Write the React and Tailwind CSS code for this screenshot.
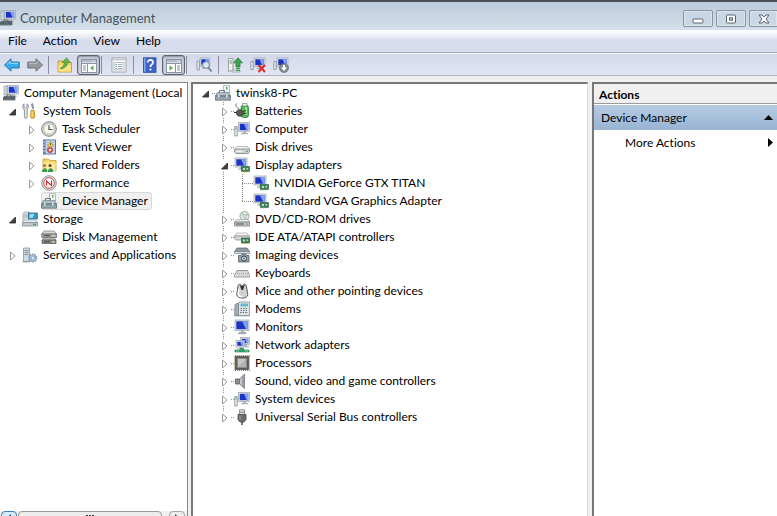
import React, { useState } from 'react';
import clsx from 'clsx';

// ---------- Icons (16x16) ----------

const Svg = ({ children }) => (
    <svg width="16" height="16" viewBox="0 0 16 16" className="block shrink-0" aria-hidden="true">{children}</svg>
);

// Blue screen with a grey frame, shared by most of the device icons
const Screen = ({ x = 4, y = 1, w = 12, h = 9 }) => (
    <g>
        <rect x={x} y={y} width={w} height={h} fill="#dfe3e6" stroke="#9aa4ac" strokeWidth=".7" />
        <rect x={x + 1.3} y={y + 1.3} width={w - 2.6} height={h - 2.6} fill="#1c33c4" />
        <path d={`M${x + w / 2} ${y + 1.3}h${w / 2 - 1.3}v${h - 2.6}h-1.6z`} fill="#7fa2f2" />
        <path d={`M${x + w / 2 - 1} ${y + h}h3v1.6h2v1.2h-7v-1.2h2z`} fill="#aab3ba" />
    </g>
);

const Card = ({ x = 8, y = 10 }) => (
    <g>
        <rect x={x} y={y} width="8" height="5" fill="#3d8258" stroke="#2a5c3d" strokeWidth=".6" />
        <path d={`M${x + 1.5} ${y + 1.5}h2v2h-2zM${x + 5} ${y + 1.5}h1.6v1.6h-1.6z`} fill="#c4dfbe" />
        <path d={`M${x + 1} ${y + 5}v1M${x + 3} ${y + 5}v1M${x + 5} ${y + 5}v1`} stroke="#c3a94c" strokeWidth=".8" />
    </g>
);

const ManagementIcon = () => (
    <Svg>
        <rect x="1" y="1" width="3" height="9" fill="#d3dade" stroke="#7f8c94" strokeWidth=".6" />
        <Screen x={4.5} y={.5} w={11} h={8.5} />
        <path d="M1 11.5h11v3.5h-12v-2z" fill="#75818a" stroke="#47525a" strokeWidth=".7" />
        <path d="M4 11.5v-1.5h4v1.5M0 13h12M3 12.5v1.5M9 12.5v1.5" stroke="#3d474e" fill="none" strokeWidth=".8" />
    </Svg>
);

const ToolsIcon = () => (
    <Svg>
        <path d="M2 .8v3l1.5 1.3L5 3.8V.8c1.6.8 2 3.4.6 4.9L5.2 7v7c0 1.8-2.8 1.8-2.8 0V7C.3 5.500.2 2 2 .8z" fill="#dfe2e4" stroke="#7c8388" strokeWidth=".8" />
        <path d="M9.2 1.2 10.8.5l.9 5-.7.8z" fill="#9fa7ac" stroke="#6d757b" strokeWidth=".6" />
        <path d="M9 7.500h3.200l.7 6.300c0 2-4.600 2-4.400 0z" fill="#f3b62c" stroke="#b97d12" strokeWidth=".7" />
        <path d="M10.200 8.500v5.500" stroke="#fde59a" />
    </Svg>
);

const ClockIcon = () => (
    <Svg>
        <circle cx="8" cy="8" r="7.3" fill="#d9dcdf" stroke="#7b828a" />
        <circle cx="8" cy="8" r="5.3" fill="#faf8ea" stroke="#b7b08c" strokeWidth=".8" />
        <path d="M8 4.2V8.5h3.5" fill="none" stroke="#4c545c" strokeWidth="1.2" />
    </Svg>
);

const EventIcon = () => (
    <Svg>
        <rect x="2.5" y="1" width="12" height="14" fill="#cddcf0" stroke="#5b76a5" />
        <path d="M5 3.500h9M5 5.500h9M5 7.500h9M5 9.500h9M5 11.500h9" stroke="#95aed0" strokeWidth=".7" />
        <rect x="2" y="1" width="2.5" height="14" fill="#6079a6" />
        <path d="M1 3h3M1 6h3M1 9h3M1 12h3" stroke="#d5d9df" />
        <path d="m9.5 2 2.800 5.200H6.700z" fill="#ffd93b" stroke="#bb9415" strokeWidth=".6" />
        <path d="M9.5 4v2" stroke="#4b3c00" strokeWidth=".9" />
        <circle cx="9" cy="11" r="2.7" fill="#e25753" stroke="#b02b28" strokeWidth=".5" />
        <path d="m8 10 2 2m0-2-2 2" stroke="#fff" />
    </Svg>
);

const SharedIcon = () => (
    <Svg>
        <path d="M2 2h5.500L9 3.500h6V14H2z" fill="#f5d566" stroke="#c19d32" strokeWidth=".8" />
        <path d="M2.500 5.500h12V14h-12z" fill="#fbe99c" />
        <circle cx="3.500" cy="8.500" r="1.500" fill="#a9672f" /><circle cx="9" cy="8.500" r="1.500" fill="#6f431d" />
        <path d="M1 15c0-4 5-5.500 5.200-1v1z" fill="#3b9a42" />
        <path d="M6.800 15c0-4 5-5.500 5.200-1v1z" fill="#35915f" />
    </Svg>
);

const PerformanceIcon = () => (
    <Svg>
        <circle cx="8" cy="8" r="7.3" fill="#dfe1e3" stroke="#858b90" strokeWidth=".9" />
        <circle cx="8" cy="8" r="5.300" fill="#fff" stroke="#d5484a" />
        <path d="M5.500 10.500V6l5 4.500V5.500" fill="none" stroke="#c92a2a" strokeWidth="1.100" />
    </Svg>
);

const DeviceManagerIcon = () => (
    <Svg>
        <path d="M8.500.5h6v8h-6z" fill="#eef2ef" stroke="#9aa9a2" strokeWidth=".7" />
        <path d="M11 2h1.500v2.500H11z" fill="#63a778" />
        <path d="M4.500 7.500v-2h5v2" fill="none" stroke="#667986" />
        <path d="M2.200 7.500h11.600l1.700 3.300H.6z" fill="#b3c0c8" stroke="#71838e" strokeWidth=".7" />
        <path d="M.5 10.800h15v4.400H.5z" fill="#8799a4" stroke="#56666f" strokeWidth=".7" />
        <path d="M3 10v2.500h1.500V10zM11 10v2.500h1.500V10z" fill="#e3e9ec" />
        <path d="M1 13.800h14" stroke="#b3c0c8" strokeWidth=".7" />
    </Svg>
);

const StorageIcon = () => (
    <Svg>
        <path d="M1 2.5 2.500 1h5v9H1z" fill="#dae1e4" stroke="#8b979e" strokeWidth=".7" />
        <path d="M2 4h5M2 6h5" stroke="#8b979e" strokeWidth=".7" />
        <rect x="6.500" y="2" width="9" height="6" fill="#2e94c4" stroke="#276d90" strokeWidth=".7" />
        <path d="M7.500 3h5l-2 4h-3z" fill="#9edcf2" />
        <path d="M2 9h12l1.500 2.500H.5z" fill="#eceff0" stroke="#8b979e" strokeWidth=".6" />
        <path d="M.5 11.500h15V15H.5z" fill="#c0c9ce" stroke="#76838b" strokeWidth=".7" />
        <path d="M11 13.300h3" stroke="#38a742" strokeWidth="1.200" />
    </Svg>
);

const DiskManagementIcon = () => (
    <Svg>
        <path d="M3 2h10l2.500 3H.8z" fill="#dbdcd9" stroke="#777976" strokeWidth=".7" />
        <path d="M.8 5h14.700v3.500H.8z" fill="#a6a8a3" stroke="#5d5f5a" strokeWidth=".7" />
        <path d="M2.500 9h11l1.500 2H1.500z" fill="#d1d2cf" stroke="#777976" strokeWidth=".6" />
        <path d="M1 11h14v3.500H1z" fill="#8d908b" stroke="#50524e" strokeWidth=".7" />
        <path d="M3 6.700h6M3 12.800h6" stroke="#3f413e" />
        <path d="M11.500 6.700h2M11.500 12.800h2" stroke="#e9eae7" strokeWidth="1.300" />
    </Svg>
);

const ServicesIcon = () => (
    <Svg>
        <path d="M1.500 1h6v13.500h-6z" fill="#cfdae0" stroke="#81939d" strokeWidth=".8" />
        <path d="M2.500 3.500h4M2.500 5.500h4M2.500 7.500h4" stroke="#6e8590" strokeWidth=".8" />
        <path d="M.5 14.800h7" stroke="#81939d" />
        <circle cx="10.800" cy="11" r="3.700" fill="#a9c3da" stroke="#7b9abb" strokeDasharray="1.500 .8" strokeWidth="1.700" />
        <circle cx="10.800" cy="11" r="1.500" fill="#fff" stroke="#7b9abb" strokeWidth=".7" />
    </Svg>
);

const BatteryIcon = () => (
    <Svg>
        <path d="M5 6C1 4 1.500 1 3 .5" fill="none" stroke="#6b7a68" />
        <rect x="7" y="2" width="7.500" height="12.500" rx="2.500" fill="#55b85a" stroke="#2d7d38" strokeWidth=".8" />
        <rect x="8.500" y=".6" width="4.500" height="2.400" fill="#e8ece8" stroke="#78847a" strokeWidth=".6" />
        <path d="M12 4v8" stroke="#b5ecb0" strokeWidth="1.500" />
        <path d="M2.500 8.500C3.500 6.500 6 6 8 7.500l1.500 2.500L8 12.500c-2 1.500-5 .5-5.500-1.500z" fill="#5d5a50" stroke="#2d2b25" strokeWidth=".7" />
        <path d="M9 8.500l3-1M9.300 11l3-1M0 9.500h2.500" stroke="#38342d" strokeWidth="1.100" />
    </Svg>
);

const ComputerIcon = () => (
    <Svg>
        <path d="M.7 5.500h2.600v9.500H.7z" fill="#e4eae4" stroke="#7f8b83" strokeWidth=".7" />
        <path d="M2 6.500v2" stroke="#4aa35b" />
        <Screen x={4.5} y={1.5} w={11} h={9} />
    </Svg>
);

const DriveIcon = () => (
    <Svg>
        <path d="M3 7.500h10.500l2 3H.8z" fill="#f2f3f2" stroke="#a2a6a4" strokeWidth=".7" />
        <path d="M.6 10h15v3L14 14.500H2L.6 13z" fill="#cfd2d1" stroke="#7f8482" strokeWidth=".8" />
        <path d="M2.500 12.300h6" stroke="#fff" />
        <path d="M12 12.300h2" stroke="#4c9b56" />
    </Svg>
);

const DisplayIcon = () => (
    <Svg>
        <Screen x={1} y={1} w={12} h={9} />
        <Card x={7.5} y={9.5} />
    </Svg>
);

const DvdIcon = () => (
    <Svg>
        <circle cx="10.500" cy="5" r="4.500" fill="#dfe9e2" stroke="#8a9a90" strokeWidth=".8" />
        <path d="M10.500 5 7.500 1.700M10.500 5l4-2M10.500 5l1 4" stroke="#76b98b" strokeWidth=".9" />
        <circle cx="10.500" cy="5" r="1.300" fill="#fff" stroke="#8a9a90" strokeWidth=".6" />
        <path d="M2.500 8.500h11.500l1.500 2.500H.8z" fill="#eff1f0" stroke="#9da2a0" strokeWidth=".7" />
        <path d="M.6 11h15v4H.6z" fill="#c7cbc9" stroke="#797e7c" strokeWidth=".8" />
        <path d="M2 13h8" stroke="#454a48" /><path d="M12 13h2" stroke="#42a750" />
    </Svg>
);

const IdeIcon = () => (
    <Svg>
        <path d="M2.500 4h10.500l2 3H.8z" fill="#f3f4f3" stroke="#a2a6a4" strokeWidth=".7" />
        <path d="M.6 7h15v4H2L.6 9.500z" fill="#d5d8d6" stroke="#868b89" strokeWidth=".7" />
        <Card x={7.5} y={9} />
    </Svg>
);

const ImagingIcon = () => (
    <Svg>
        <path d="M3 1h10l2.500 3.500H.5z" fill="#8f9aa1" stroke="#525e65" strokeWidth=".7" />
        <path d="M.5 4.500h15v2H.5z" fill="#d5dbde" stroke="#65727a" strokeWidth=".6" />
        <path d="M4.500 8.500h2.500l1-1.500h3.500l1 1.500h2.500V15H4.500z" fill="#93a1aa" stroke="#47545d" strokeWidth=".7" />
        <circle cx="10" cy="11.500" r="2.500" fill="#dfe9ef" stroke="#344049" />
        <circle cx="10" cy="11.500" r="1" fill="#2b6591" />
    </Svg>
);

const KeyboardIcon = () => (
    <Svg>
        <path d="M3 5.500h10.500l2 5v1.500H.6v-1.500z" fill="#e7e8e8" stroke="#7d8182" strokeWidth=".8" />
        <path d="M3.500 7h10M3 8.500h11M2.500 10h12" stroke="#9da1a3" strokeDasharray="1 1" />
    </Svg>
);

const MouseIcon = () => (
    <Svg>
        <path d="M4 2.500C5 .5 7 .8 7.500 3h1C9 .700 11.500.5 12.300 2.500l1.500 9c0 4.800-11 4.800-11 0z" fill="#cfd1d3" stroke="#4c5054" strokeWidth=".9" />
        <path d="M5.500 1.500 7.500 7h1.500l2-5.500-2 1.500h-2z" fill="#2f3336" />
        <path d="M4.800 6 4.300 11c.5 2 2.500 2.800 4 2.500" stroke="#fff" fill="none" strokeWidth="1.400" />
    </Svg>
);

const ModemIcon = () => (
    <Svg>
        <path d="M5 1h10.500v13.500H2.500z" fill="#e0e5e8" stroke="#7c888f" strokeWidth=".7" />
        <path d="M1 3.500 3 2.500h1.500v11L.7 14.500z" fill="#a4b0b8" stroke="#65727a" strokeWidth=".7" />
        <rect x="6.500" y="2.500" width="7.500" height="3" fill="#62b9cf" />
        <path d="M6.500 7.500h7.500M6.500 9.500h7.500M6 11.500h8" stroke="#65727a" strokeDasharray="1.500 1" />
        <path d="M.5 14.800h15" stroke="#8a959b" />
    </Svg>
);

const MonitorIcon = () => (
    <Svg>
        <Screen x={1} y={1} w={14} h={10.5} />
        <path d="M4 14.500h8" stroke="#9ba5ac" strokeWidth="1.300" />
    </Svg>
);

const NetworkIcon = () => (
    <Svg>
        <Screen x={6.5} y={.5} w={9} h={7} />
        <Screen x={2} y={3.5} w={8.5} h={6.5} />
        <path d="M6.500 11.500h3v1.500H15v2H1v-2h5.500z" fill="#37a46b" stroke="#1f7a4b" strokeWidth=".6" />
        <path d="M2 14h3M11 14h3" stroke="#97d9b5" strokeWidth=".8" />
    </Svg>
);

const ProcessorIcon = () => (
    <Svg>
        <rect x=".8" y=".8" width="14.400" height="14.400" fill="none" stroke="#9b8453" strokeWidth="1.500" strokeDasharray="1 1" />
        <rect x="1.500" y="1.500" width="13" height="13" fill="#5d5c57" stroke="#3e3d39" strokeWidth=".6" />
        <rect x="3.500" y="3.500" width="9" height="9" fill="#c6c8c7" stroke="#8a8c8b" strokeWidth=".7" />
        <path d="m4 12 8-8v8z" fill="#b0b2b1" />
    </Svg>
);

const SoundIcon = () => (
    <Svg>
        <path d="M1.500 6h4v5h-4z" fill="#8b9094" stroke="#565b5f" strokeWidth=".8" />
        <path d="M5.500 6 10.500 1v14.500l-5-4.500z" fill="#c2c6c9" stroke="#6c7175" strokeWidth=".8" />
        <path d="M9 3.500v10" stroke="#777c80" />
    </Svg>
);

const UsbIcon = () => (
    <Svg>
        <path d="M5.500.8h5V6h-5z" fill="#e7e8e9" stroke="#76797b" strokeWidth=".8" />
        <path d="M7 2.500v1.500M9 2.500v1.500" stroke="#4d5052" />
        <path d="M4 5.500h8v5L10 13H6l-2-2.500z" fill="#6a6d70" stroke="#424547" strokeWidth=".8" />
        <path d="M6 6.500v4" stroke="#a4a7a9" /><path d="M8 13v3" stroke="#55585a" strokeWidth="1.600" />
    </Svg>
);

// ---------- Toolbar icons ----------

const ArrowIcon = ({ forward }) => (
    <Svg>
        <path
            d={forward ? 'M15.500 8 9 1.800V5H.8v6H9v3.200z' : 'M.5 8 7 1.800V5h8.200v6H7v3.200z'}
            fill={forward ? '#969a9e' : '#36aee9'}
            stroke={forward ? '#65696d' : '#1c6ba4'}
            strokeWidth=".9"
            strokeLinejoin="round"
        />
        <path d={forward ? 'M2 6.300h8V4.500' : 'M14 6.300H6V4.500L3 7.500'} fill="none" stroke={forward ? '#c5c8ca' : '#a5e4fa'} strokeWidth=".9" />
    </Svg>
);

const UpFolderIcon = () => (
    <Svg>
        <path d="M1 4h5l1.500 1.500H14.500V15H1z" fill="#f4cf64" stroke="#bd9335" strokeWidth=".8" />
        <path d="M1.500 8h12.500v6.500H1.500z" fill="#fbe08a" />
        <path d="M3.500 11C6 10 7.500 8 7.500 5.500H5.200L9.500.8 13.200 5.500h-2.700C10.500 9 7.500 11.500 3.500 11.800z" fill="#62b64a" stroke="#3c8a2e" strokeWidth=".7" />
    </Svg>
);

const PaneIcon = ({ right }) => (
    <Svg>
        <rect x=".5" y="2.500" width="15" height="13" fill="#fff" stroke="#8a93a0" />
        <path d="M1 3h14v2.500H1z" fill="#b3bdc9" />
        <path d="M11 4h1M13 4h1" stroke="#fff" />
        <path d="M1 6.500h14" stroke="#8a93a0" />
        <path d={right ? 'M9.500 7v8' : 'M6.500 7v8'} stroke="#8a93a0" />
        <path d={right ? 'M11 9h3M11 11h3M11 13h3' : 'M2 9h3M2 11h3M2 13h3'} stroke="#8592a2" />
        <path d={right ? 'm3.500 8.500 3.500 2.500L3.500 13.500z' : 'M12.500 8.500 9 11l3.500 2.500z'} fill="#55a94a" />
    </Svg>
);

const PropertiesIcon = () => (
    <Svg>
        <rect x="1" y="1" width="14" height="14" fill="#fff" stroke="#9ea5ac" />
        <path d="M1.500 2h13v1.500h-13z" fill="#c3cad1" />
        <rect x="3" y="5.500" width="10" height="7.500" fill="#f6f8fa" stroke="#a5adb5" strokeWidth=".8" />
        <path d="M4.500 7.500H6M4.500 9.500H6M4.500 11.500H6" stroke="#5fa3bd" />
        <path d="M7 7.500h4.500M7 9.500h4.500M7 11.500h4.500" stroke="#97a1ab" strokeWidth=".8" />
    </Svg>
);

const HelpIcon = () => (
    <Svg>
        <rect x="1.500" y=".8" width="12.500" height="14.500" fill="#3b66c8" stroke="#24479b" strokeWidth=".8" />
        <path d="M2 1.200h1.500v13.600H2z" fill="#87a9e8" />
        <path d="M5.700 5.500c0-3.500 5.300-3.300 5.300 0 0 2-2.600 2-2.600 4.500" fill="none" stroke="#fff" strokeWidth="1.700" />
        <circle cx="8.400" cy="12.500" r="1.100" fill="#fff" />
    </Svg>
);

const ScanIcon = () => (
    <Svg>
        <path d="M1 4h2.500v9H1z" fill="#dfe4e8" stroke="#7c868f" strokeWidth=".7" />
        <Screen x={4} y={1} w={10} h={8} />
        <circle cx="10" cy="8" r="3.300" fill="#d7ebf8" stroke="#7d8c98" strokeWidth="1.100" />
        <path d="m12.500 10.500 3 4" stroke="#6f818f" strokeWidth="1.800" />
    </Svg>
);

const UpdateIcon = () => (
    <Svg>
        <path d="M1.500 1.500h4.500V13l-4.500 1.500z" fill="#eef1ee" stroke="#85908a" strokeWidth=".8" />
        <path d="M2.500 4H5M2.500 6H5" stroke="#7d8981" />
        <path d="M5 13h8v2H5z" fill="#e6e9e4" stroke="#8f9a93" strokeWidth=".7" />
        <path d="m11 .8 4.500 5H13V10H9V5.800H6.500z" fill="#3aa64f" stroke="#1f7a34" strokeWidth=".7" />
        <path d="M9 11.500h4M9 13.500h4" stroke="#2f9a45" strokeWidth="1.200" />
    </Svg>
);

const UninstallIcon = () => (
    <Svg>
        <path d="M.8 4.500h2.500v8H.8z" fill="#dfe4e8" stroke="#7c868f" strokeWidth=".7" />
        <Screen x={4} y={1} w={11} h={8.5} />
        <path d="m8.500 8 6.500 7M15 8l-6.500 7" stroke="#d92b2b" strokeWidth="2" />
    </Svg>
);

const DisableIcon = () => (
    <Svg>
        <path d="M.8 4.500h2.500v8H.8z" fill="#dfe4e8" stroke="#7c868f" strokeWidth=".7" />
        <Screen x={4} y={1} w={11} h={8.5} />
        <circle cx="11" cy="11" r="4.500" fill="#85898d" stroke="#686c70" strokeWidth=".7" />
        <path d="M10 8h2v2.500h2L11 14l-3-3.500h2z" fill="#fff" />
    </Svg>
);

// ---------- Tree ----------

const consoleTree = {
    label: 'Computer Management (Local', icon: ManagementIcon, children: [
        {
            label: 'System Tools', icon: ToolsIcon, state: 'open', children: [
                { label: 'Task Scheduler', icon: ClockIcon, state: 'closed' },
                { label: 'Event Viewer', icon: EventIcon, state: 'closed' },
                { label: 'Shared Folders', icon: SharedIcon, state: 'closed' },
                { label: 'Performance', icon: PerformanceIcon, state: 'closed' },
                { label: 'Device Manager', icon: DeviceManagerIcon },
            ],
        },
        {
            label: 'Storage', icon: StorageIcon, state: 'open', children: [
                { label: 'Disk Management', icon: DiskManagementIcon },
            ],
        },
        { label: 'Services and Applications', icon: ServicesIcon, state: 'closed' },
    ],
};

const deviceTree = {
    label: 'twinsk8-PC', icon: DeviceManagerIcon, state: 'open', children: [
        { label: 'Batteries', icon: BatteryIcon, state: 'closed' },
        { label: 'Computer', icon: ComputerIcon, state: 'closed' },
        { label: 'Disk drives', icon: DriveIcon, state: 'closed' },
        {
            label: 'Display adapters', icon: DisplayIcon, state: 'open', children: [
                { label: 'NVIDIA GeForce GTX TITAN', icon: DisplayIcon },
                { label: 'Standard VGA Graphics Adapter', icon: DisplayIcon },
            ],
        },
        { label: 'DVD/CD-ROM drives', icon: DvdIcon, state: 'closed' },
        { label: 'IDE ATA/ATAPI controllers', icon: IdeIcon, state: 'closed' },
        { label: 'Imaging devices', icon: ImagingIcon, state: 'closed' },
        { label: 'Keyboards', icon: KeyboardIcon, state: 'closed' },
        { label: 'Mice and other pointing devices', icon: MouseIcon, state: 'closed' },
        { label: 'Modems', icon: ModemIcon, state: 'closed' },
        { label: 'Monitors', icon: MonitorIcon, state: 'closed' },
        { label: 'Network adapters', icon: NetworkIcon, state: 'closed' },
        { label: 'Processors', icon: ProcessorIcon, state: 'closed' },
        { label: 'Sound, video and game controllers', icon: SoundIcon, state: 'closed' },
        { label: 'System devices', icon: ComputerIcon, state: 'closed' },
        { label: 'Universal Serial Bus controllers', icon: UsbIcon, state: 'closed' },
    ],
};

// One 19px column of a row: dotted guide lines and the expander triangle
const Guide = ({ vertical, half, branch, state }) => (
    <svg width="19" height="18" viewBox="0 0 19 18" className="block shrink-0" aria-hidden="true">
        {vertical && <path d={half ? 'M8.500 0v10' : 'M8.500 0v18'} stroke="#8c8c8c" strokeDasharray="1 1" />}
        {branch && <path d={state ? 'M16 9.500h3' : 'M8 9.500h11'} stroke="#8c8c8c" strokeDasharray="1 1" />}
        {state && <rect x="6" y="3" width="8" height="13" fill="#fff" />}
        {state === 'closed' && <path d="M7.500 6v8l4.500-4z" fill="#fff" stroke="#9a9a9a" />}
        {state === 'open' && <path d="M12.500 7v6h-6z" fill="#404040" stroke="#262626" strokeWidth=".8" />}
    </svg>
);

const TreeNode = ({ node, lines, guides = [], last, root, selected, onSelect }) => {
    const [isOpen, setIsOpen] = useState(node.state !== 'closed');
    const Icon = node.icon;
    const state = node.state && (isOpen && node.children ? 'open' : 'closed');
    const isSelected = selected === node.label;
    const rootGuides = node.state ? [false] : [];

    return (
        <li role="treeitem" aria-selected={isSelected}>
            <div className="flex h-[18px] items-center">
                {guides.map((vertical, i) => <Guide key={i} vertical={vertical} />)}
                {node.state && (
                    <button type="button" onClick={() => setIsOpen(!isOpen)} aria-label={`Toggle ${node.label}`}>
                        <Guide vertical={lines && !root} half={last} branch={lines} state={state} />
                    </button>
                )}
                {!node.state && !root && <Guide vertical={lines} half={last} branch={lines} />}
                <button
                    type="button"
                    onClick={() => onSelect(node.label)}
                    className={clsx(
                        'flex h-[18px] items-center gap-[5px] rounded-sm pr-1 whitespace-nowrap',
                        isSelected && 'bg-[#f0f0f0] ring-1 ring-[#d9d9d9] ring-inset'
                    )}
                >
                    <Icon />
                    <span>{node.label}</span>
                </button>
            </div>
            {isOpen && node.children && (
                <ul role="group">
                    {node.children.map((child, i) => (
                        <TreeNode
                            key={child.label}
                            node={child}
                            lines={lines}
                            guides={root ? rootGuides : [...guides, lines && !last]}
                            last={i === node.children.length - 1}
                            selected={selected}
                            onSelect={onSelect}
                        />
                    ))}
                </ul>
            )}
        </li>
    );
};

// ---------- Window parts ----------

const Separator = () => <span className="h-[18px] w-px bg-[#8b8f9b]" />;

const ToolButton = ({ label, pressed, children }) => (
    <button
        type="button"
        aria-label={label}
        className={clsx(
            'flex h-5 w-[23px] shrink-0 items-center justify-center',
            pressed && 'rounded-[3px] border border-[#62646c] bg-[#cfd2de] shadow-[inset_0_1px_2px_#8b8e99]'
        )}
    >
        {children}
    </button>
);

const captionButton = 'flex h-[17px] items-center justify-center rounded-[2px] border border-[#8494a5] bg-[#c9d6e3] shadow-[inset_0_0_0_1px_#dce6ef]';

const TitleBar = () => (
    <header className="flex h-[30px] shrink-0 items-start border-t-2 border-[#4a4e57] bg-linear-to-b from-[#bccbda] to-[#d5e0eb]">
        <div className="flex flex-1 items-center gap-1 pt-2">
            <ManagementIcon />
            <h1 className="text-[13px] text-[#46525e]">Computer Management</h1>
        </div>
        <div className="flex gap-[3px] pt-2">
            <button type="button" aria-label="Minimize" className={clsx(captionButton, 'w-[30px]')}>
                <svg width="12" height="10" viewBox="0 0 12 10"><rect x="1" y="5" width="10" height="4" rx="1" fill="#fff" stroke="#59646f" /></svg>
            </button>
            <button type="button" aria-label="Maximize" className={clsx(captionButton, 'w-[30px]')}>
                <svg width="12" height="10" viewBox="0 0 12 10"><rect x="1.500" y="1" width="9" height="8" rx="1" fill="#fff" stroke="#59646f" /><rect x="4.500" y="3.800" width="3" height="2.400" fill="#c9d6e3" stroke="#59646f" /></svg>
            </button>
            <button type="button" aria-label="Close" className={clsx(captionButton, 'w-7 rounded-r-none border-r-0')}>
                <svg width="12" height="10" viewBox="0 0 12 10"><path d="M1 1h3l2 2 2-2h3L8 5l3 4H8L6 7 4 9H1l3-4z" fill="#fff" stroke="#59646f" /></svg>
            </button>
        </div>
    </header>
);

const MenuBar = () => (
    <nav className="flex h-[23px] shrink-0 items-center border-b border-[#a3a7b5] bg-linear-to-b from-[#fbfcfe] from-10% via-[#d6dbec] via-50% to-[#d9ddee]">
        {['File', 'Action', 'View', 'Help'].map((item) => (
            <button key={item} type="button" className="px-2">{item}</button>
        ))}
    </nav>
);

const ToolBar = () => (
    <div role="toolbar" className="flex h-[23px] shrink-0 items-center border-t border-b border-t-[#f8f9fd] border-b-[#b0b3bd] bg-linear-to-b from-[#d3d8ea] to-[#e2e5f3]">
        <ToolButton label="Back"><ArrowIcon /></ToolButton>
        <ToolButton label="Forward"><ArrowIcon forward /></ToolButton>
        <div className="flex items-center gap-px pl-[2px]">
            <Separator />
            <div className="flex gap-px pl-[3px]">
                <ToolButton label="Up one level"><UpFolderIcon /></ToolButton>
                <ToolButton label="Console tree" pressed><PaneIcon /></ToolButton>
            </div>
            <Separator />
            <div className="pr-[2px] pl-1"><ToolButton label="Properties"><PropertiesIcon /></ToolButton></div>
            <Separator />
            <div className="flex gap-px pl-[3px]">
                <ToolButton label="Help"><HelpIcon /></ToolButton>
                <ToolButton label="Action pane" pressed><PaneIcon right /></ToolButton>
            </div>
            <Separator />
            <div className="pr-[2px] pl-1"><ToolButton label="Scan for hardware changes"><ScanIcon /></ToolButton></div>
            <Separator />
            <div className="flex pl-[3px]">
                <ToolButton label="Update driver"><UpdateIcon /></ToolButton>
                <ToolButton label="Uninstall"><UninstallIcon /></ToolButton>
                <ToolButton label="Disable"><DisableIcon /></ToolButton>
            </div>
        </div>
    </div>
);

const ActionsPane = () => (
    <aside className="w-[185px] shrink-0 border-t-2 border-l-2 border-[#75777a] bg-white">
        <h2 className="flex h-5 items-center border-b border-[#9a9a9e] bg-[#f0f0f0] pt-[2px] pl-[5px] font-bold">Actions</h2>
        <button type="button" className="mt-px flex h-[25px] w-full items-center justify-between bg-linear-to-b from-[#b6cbe2] to-[#98b4d3] pr-1 pl-[7px]">
            Device Manager
            <svg width="9" height="5" viewBox="0 0 9 5"><path d="M4.500 0 9 5H0z" /></svg>
        </button>
        <button type="button" className="flex h-[25px] w-full items-center justify-between pr-1 pl-[31px]">
            More Actions
            <svg width="5" height="9" viewBox="0 0 5 9"><path d="M0 0v9l5-4.500z" /></svg>
        </button>
    </aside>
);

const App = () => {
    const [selected, setSelected] = useState('Device Manager');
    const [device, setDevice] = useState(null);

    return (
        <div className="flex h-screen flex-col overflow-hidden bg-[#f0f0f0] font-['Lato','Open_Sans',sans-serif] text-[12px] leading-4 text-black [font-variant-ligatures:none]">
            <TitleBar />
            <MenuBar />
            <ToolBar />
            <main className="flex min-h-0 flex-1 pt-[6px]">
                <section className="flex w-[188px] shrink-0 flex-col overflow-hidden border-t border-r border-[#85878b] bg-white">
                    <ul role="tree" aria-label="Console" className="min-h-0 flex-1 overflow-hidden pt-px pl-[3px]">
                        <TreeNode node={consoleTree} root selected={selected} onSelect={setSelected} />
                    </ul>
                    {/* Horizontal scroll bar */}
                    <div className="flex h-[5px] shrink-0 gap-px overflow-hidden bg-[#f0f0f0] pr-[2px] pl-px">
                        <button type="button" aria-label="Scroll left" className="flex h-4 w-4 items-start justify-center rounded-sm border border-[#3c7fb1] bg-[#d5ecf8] pt-[2px]">
                            <svg width="4" height="7" viewBox="0 0 4 7"><path d="M4 0v7L0 3.500z" fill="#28506b" /></svg>
                        </button>
                        <div className="flex h-4 flex-1 justify-center rounded-sm border border-[#979797] bg-[#ececec] pt-[3px]">
                            <svg width="8" height="6" viewBox="0 0 8 6" aria-hidden="true"><path d="M1 0v6M4 0v6M7 0v6" stroke="#333" strokeWidth="2" /></svg>
                        </div>
                        <button type="button" aria-label="Scroll right" className="ml-[6px] flex h-4 w-4 items-start justify-center rounded-sm border border-[#a5a5a5] bg-[#ececec] pt-[2px]">
                            <svg width="4" height="7" viewBox="0 0 4 7"><path d="M0 0v7l4-3.500z" fill="#444" /></svg>
                        </button>
                    </div>
                </section>
                <section className="ml-[3px] min-w-0 flex-1 overflow-hidden border-t-2 border-r border-l-2 border-[#75777a] border-r-[#d8d8d8] bg-white">
                    <ul role="tree" aria-label="Devices" className="pl-[3px]">
                        <TreeNode node={deviceTree} root lines selected={device} onSelect={setDevice} />
                    </ul>
                </section>
                <div className="w-1 shrink-0" />
                <ActionsPane />
            </main>
        </div>
    );
};

export default App;
